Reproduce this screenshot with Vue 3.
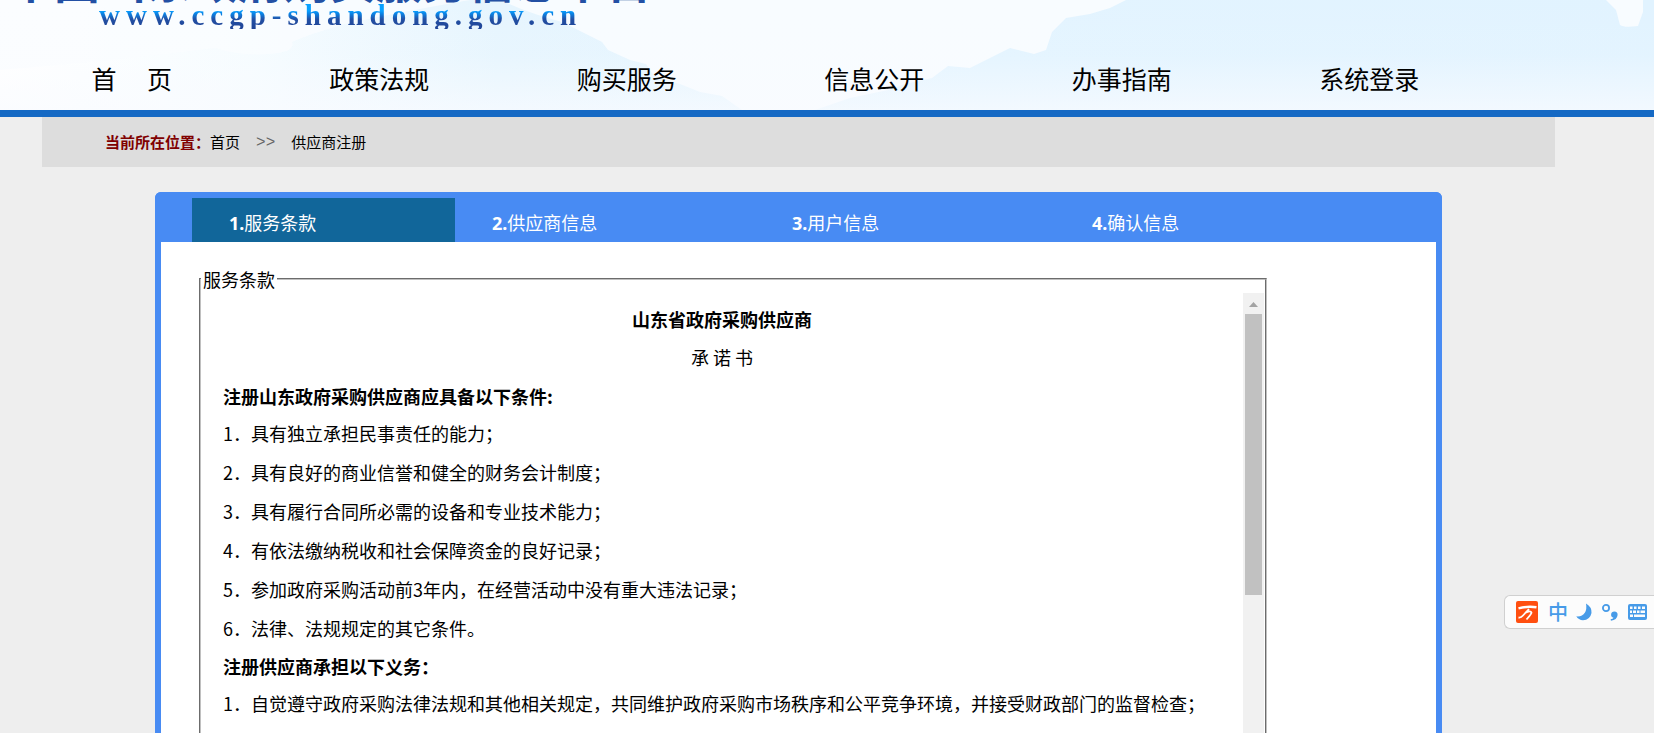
<script setup>
const nav = ['首\u3000 页', '政策法规', '购买服务', '信息公开', '办事指南', '系统登录']
const steps = ['服务条款', '供应商信息', '用户信息', '确认信息']
const current = 0
const conditions = [
  '具有独立承担民事责任的能力；',
  '具有良好的商业信誉和健全的财务会计制度；',
  '具有履行合同所必需的设备和专业技术能力；',
  '有依法缴纳税收和社会保障资金的良好记录；',
  '参加政府采购活动前3年内，在经营活动中没有重大违法记录；',
  '法律、法规规定的其它条件。'
]
const duties = [
  '自觉遵守政府采购法律法规和其他相关规定，共同维护政府采购市场秩序和公平竞争环境，并接受财政部门的监督检查；'
]
</script>

<template>
  <div class="page">
    <header class="header">
      <svg class="sky" viewBox="0 0 1654 110" preserveAspectRatio="none" aria-hidden="true">
        <defs>
          <linearGradient id="base" x1="0" y1="0" x2="1" y2="0">
            <stop offset="0" stop-color="#ffffff" />
            <stop offset="0.15" stop-color="#f6fcff" />
            <stop offset="0.3" stop-color="#e6f5fe" />
            <stop offset="0.6" stop-color="#e3f4ff" />
            <stop offset="1" stop-color="#e1f3ff" />
          </linearGradient>
          <linearGradient id="mist" x1="0" y1="0" x2="0" y2="1">
            <stop offset="0" stop-color="#f9fbff" stop-opacity="0" />
            <stop offset="0.5" stop-color="#f9fbff" stop-opacity="0.1" />
            <stop offset="1" stop-color="#f9fbff" stop-opacity="0.7" />
          </linearGradient>
        </defs>
        <rect width="1654" height="110" fill="url(#base)" />
        <path d="M0 0H470Q400 12 345 24Q310 34 292 42Q296 52 270 54Q240 56 215 48Q120 60 0 70Z" fill="#fafdff" opacity="0.8" />
        <path d="M500 0Q530 14 562 22L582 32L602 42L608 50L630 60L646 64L654 76L680 84L700 92L722 96L742 110H815L850 98L888 90L905 84L932 78L948 66L970 68L990 58L1010 48L1034 54L1046 50L1052 32L1066 18L1090 14L1110 8L1126 0Z" fill="#f8fcff" />
        <path d="M1606 0L1616 10L1620 25Q1624 28 1638 26L1643 12V0Z" fill="#f8fcff" />
        <rect width="1654" height="110" fill="url(#mist)" />
      </svg>
      <div class="brand">
        <h1 class="brand-name">中国山东政府购买服务信息平台</h1>
        <p class="brand-url">www.ccgp-shandong.gov.cn</p>
      </div>
      <nav class="nav">
        <a v-for="item in nav" :key="item" href="#">{{ item }}</a>
      </nav>
    </header>

    <nav class="crumbs">
      <strong>当前所在位置：</strong>
      <a href="#">首页</a>
      <span class="arrows">&gt;&gt;</span>
      <a href="#">供应商注册</a>
    </nav>

    <main class="panel">
      <ol class="steps">
        <li v-for="(step, i) in steps" :key="step" :class="{ active: i === current }">
          <b>{{ i + 1 }}.</b>{{ step }}
        </li>
      </ol>
      <div class="body">
        <fieldset class="terms">
          <legend>服务条款</legend>
          <article class="text">
            <h2>山东省政府采购供应商</h2>
            <p class="subtitle">承 诺 书</p>
            <h3>注册山东政府采购供应商应具备以下条件:</h3>
            <p v-for="(line, i) in conditions" :key="line">{{ i + 1 }}．{{ line }}</p>
            <h3>注册供应商承担以下义务：</h3>
            <p v-for="(line, i) in duties" :key="line">{{ i + 1 }}．{{ line }}</p>
          </article>
          <div class="track">
            <svg class="up" viewBox="0 0 21 21" aria-hidden="true"><path d="M6 14L10.500 9L15 14Z" fill="#a3a3a3" /></svg>
            <div class="thumb"></div>
          </div>
        </fieldset>
      </div>
    </main>

    <div class="ime">
      <button type="button" class="logo" aria-label="输入法">
        <svg viewBox="0 0 22 22">
          <rect width="22" height="22" rx="2" fill="#ff4f10" />
          <path d="M2.500 7.300Q11 5 20.500 6.200" fill="none" stroke="#fff" stroke-width="2.400" />
          <path d="M2.500 16.500Q5 17 7 14.500L13 8M9 12Q14.500 9 15.500 11.500Q15.500 13 10.500 18.500" fill="none" stroke="#fff" stroke-width="1.800" />
        </svg>
      </button>
      <button type="button" class="lang">中</button>
      <button type="button" class="moon" aria-label="半角">
        <svg viewBox="0 0 16 18"><path d="M10 0.500Q16 4 15.500 10Q14 17 7 17.300Q2.500 17 0.300 13.300Q6 14 9 9.500Q11 6 10 0.500Z" fill="#479be8" /></svg>
      </button>
      <button type="button" class="punct" aria-label="中文标点">
        <svg viewBox="0 0 16 17">
          <circle cx="4" cy="4" r="3.100" fill="none" stroke="#479be8" stroke-width="1.800" />
          <path d="M12.300 7.500A3.300 3.300 0 0 1 15.600 11Q15 16 9 16.700Q8.600 16 8.700 15.300Q11 15 11.500 13.800A3.200 3.200 0 0 1 12.300 7.500Z" fill="#479be8" />
        </svg>
      </button>
      <button type="button" class="keys" aria-label="软键盘">
        <svg viewBox="0 0 19 16">
          <rect width="19" height="16" rx="2" fill="#479be8" />
          <path d="M2 2.500h2.500v2.500h-2.500zM6 2.500h2.500v2.500h-2.500zM10 2.500h2.500v2.500h-2.500zM14 2.500h3v2.500h-3zM2 6.500h2v2.500h-2zM5 6.500h3v2.500h-3zM9 6.500h2.500v2.500h-2.500zM12.500 6.500h4.500v2.500h-4.500zM2 10.500h3v2.500h-3zM6 10.500h11v2.500h-11z" fill="#fcfcfc" />
        </svg>
      </button>
    </div>
  </div>
</template>

<style>
body {
  background: #eeeeee;
}
</style>

<style scoped>
.page {
  min-height: 100vh;
  display: flex;
  flex-direction: column;
  position: relative;
  overflow: hidden;
  color: #000;
  font-family: 'Noto Sans CJK SC', sans-serif;
}

h1, h2, h3, p, ol {
  margin: 0;
  padding: 0;
}

a {
  color: inherit;
  text-decoration: none;
}

.header {
  position: relative;
  overflow: hidden;
  border-bottom: 7px solid #1569c4;
}

.sky {
  position: absolute;
  inset: 0;
  width: 100%;
  height: 100%;
}

.brand {
  position: relative;
  margin-top: -45px;
}

.brand-name {
  padding-left: 8px;
  font-size: 46px;
  line-height: 46px;
  color: #2350a4;
  white-space: nowrap;
}

.brand-url {
  display: inline-block;
  vertical-align: top;
  margin-left: 99px;
  font: bold 29px/28px 'Liberation Serif', serif;
  letter-spacing: 6px;
  color: transparent;
  background: linear-gradient(#08a0ff 35%, #0a84e6 45%, #2350a4 65%, #1f4496);
  background-clip: text;
}

.nav {
  position: relative;
  display: grid;
  grid-template-columns: repeat(6, 1fr);
  margin: 30px 161px 0 8px;
  height: 51px;
  text-align: center;
  font-size: 25px;
  line-height: 38px;
  white-space: nowrap;
}

.crumbs {
  display: flex;
  align-items: center;
  height: 48px;
  margin: 0 99px 25px 42px;
  padding: 0 0 2px 63px;
  background: #dddddd;
  font-size: 15px;
}

.crumbs strong {
  color: #800000;
}

.arrows {
  margin: 0 16px;
  color: #666;
  font: 16px/16px 'Liberation Mono', monospace;
  padding-top: 4px;
}

.panel {
  flex: 1;
  display: flex;
  flex-direction: column;
  margin: 0 212px 0 155px;
  border: 6px solid #488bf3;
  border-bottom: 0;
  border-radius: 6px 6px 0 0;
  background: #fff;
}

.steps {
  display: flex;
  height: 44px;
  padding-left: 31px;
  list-style: none;
  background: #488bf3;
  color: #fff;
  font-size: 18px;
  line-height: 48px;
}

.steps li {
  width: 263px;
  padding-left: 37px;
  margin-right: 37px;
  box-sizing: border-box;
}

.steps .active {
  margin-right: 0;
  background: #11669a;
}

.steps b {
  font-family: 'Noto Sans', sans-serif;
}

.body {
  flex: 1;
  display: flex;
  padding: 25px 169px 0 38px;
}

.terms {
  flex: 1;
  display: flex;
  min-width: 0;
  margin: 0;
  padding: 2px 1px 0 0;
  border: 2px groove #c0c0c0;
  border-bottom: 0;
  font-size: 18px;
}

.terms legend {
  padding: 0 2px;
  line-height: 24px;
}

.text {
  flex: 1;
  padding: 7px 22px 0;
}

.text h2,
.text .subtitle {
  font-size: 18px;
  line-height: 38px;
  text-align: center;
}

.text .subtitle {
  margin-bottom: 2px;
}

.text h3 {
  font-size: 18px;
  line-height: 36px;
}

.text p {
  line-height: 39px;
}

.track {
  width: 21px;
  background: #f1f1f1;
}

.up {
  display: block;
  width: 21px;
  height: 21px;
}

.thumb {
  height: 281px;
  margin: 0 2px;
  background: #c1c1c1;
}

.ime {
  position: absolute;
  right: 0;
  top: 595px;
  display: flex;
  align-items: center;
  gap: 10px;
  height: 32px;
  padding: 0 7px 0 11px;
  border: 1px solid #d0d0d0;
  border-right: 0;
  border-radius: 6px 0 0 6px;
  background: #fcfcfc;
}

.ime button {
  display: block;
  padding: 0;
  border: 0;
  background: none;
  color: #479be8;
}

.ime svg {
  display: block;
  width: 100%;
}

.ime .logo {
  width: 22px;
}

.ime .lang {
  width: 18px;
  font: 500 20px/30px 'Noto Sans CJK SC', sans-serif;
}

.ime .moon,
.ime .punct {
  width: 16px;
}

.ime .keys {
  width: 19px;
}
</style>
